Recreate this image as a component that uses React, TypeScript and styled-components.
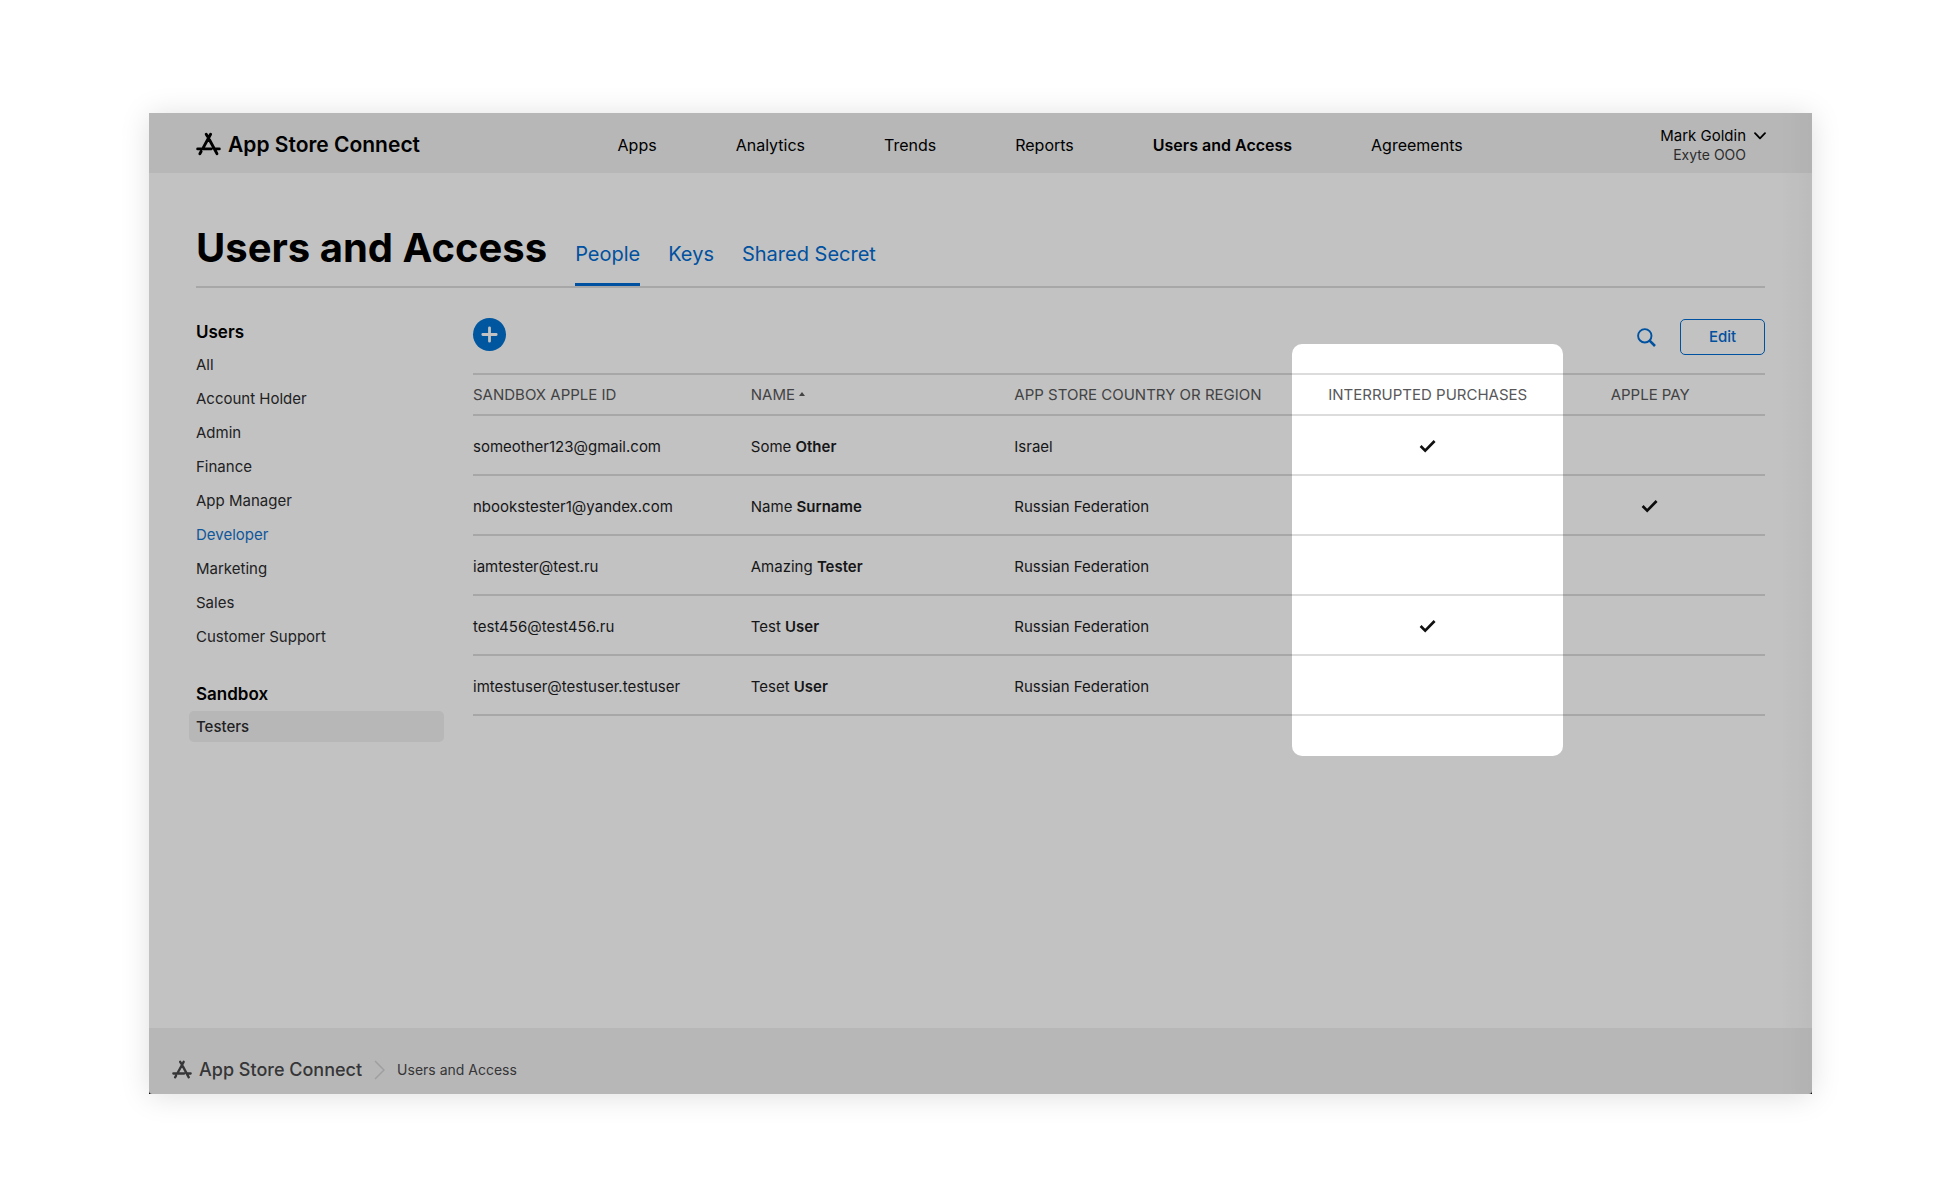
import React from "react";
import styled, { createGlobalStyle, css } from "styled-components";

const GlobalStyle = createGlobalStyle`
  *, *::before, *::after { box-sizing: border-box; }
  body {
    margin: 0;
    background: #fff;
    color: #1d1d1f;
    font-family: Inter, "Liberation Sans", sans-serif;
    font-size: 15px;
    line-height: 20px;
  }
  a { color: inherit; text-decoration: none; }
  button { font: inherit; color: inherit; background: none; border: 0; padding: 0; cursor: pointer; }
  h1, h2, ul, p { margin: 0; padding: 0; }
  ul { list-style: none; }
  svg { display: block; flex: none; }
`;

const blue = "#006bd2";
const bar = "#f1f1f1";
const rule = "#dcdcdc";

const Page = styled.div`
  display: flex;
  min-height: 100vh;
  padding: 113px 148px 106px 149px;
`;

const Frame = styled.div`
  position: relative;
  display: flex;
  flex: 1;
  flex-direction: column;
  min-width: 0;
  overflow: hidden;
  background: #000;
  box-shadow: 0 2px 28px rgba(0, 0, 0, 0.13);

  &::after {
    content: "";
    position: absolute;
    inset: 0 0 0 auto;
    width: 32px;
    background: linear-gradient(to right, transparent, rgba(0, 0, 0, 0.03));
    pointer-events: none;
  }
`;

const Header = styled.header`
  display: flex;
  align-items: center;
  justify-content: space-between;
  height: 60px;
  padding: 3px 46px 0 47px;
  background: ${bar};
  color: #000;
`;

const Brand = styled.a<{ $small?: boolean }>`
  display: flex;
  align-items: center;
  gap: 7px;
  font-size: ${(p) => (p.$small ? 18 : 21)}px;
  line-height: 24px;
  font-weight: ${(p) => (p.$small ? 500 : 600)};
`;

const Nav = styled.nav`
  display: flex;
  gap: 79px;
`;

const NavLink = styled.a<{ $active?: boolean }>`
  font-size: 16px;
  font-weight: ${(p) => (p.$active ? 600 : 400)};
`;

const Account = styled.button`
  display: flex;
  align-items: flex-start;
  gap: 8px;
  text-align: right;
  line-height: 19px;

  svg { margin-top: 6px; }
`;

const Company = styled.span`
  display: block;
  font-size: 14px;
  color: #3a3a3c;
`;

const Main = styled.main`
  flex: 1;
  padding: 48px 47px;
  background: #fff;
`;

const TitleBar = styled.div`
  display: flex;
  align-items: flex-end;
  gap: 28px;
  height: 67px;
  border-bottom: 2px solid ${rule};
`;

const Title = styled.h1`
  padding-bottom: 13px;
  color: #000;
  font-size: 40px;
  line-height: 50px;
  font-weight: 700;
`;

const Tabs = styled.nav`
  display: flex;
  gap: 28px;
`;

const Tab = styled.a<{ $active?: boolean }>`
  padding-bottom: 15px;
  border-bottom: 3px solid ${(p) => (p.$active ? blue : "transparent")};
  color: ${blue};
  font-size: 20px;
  line-height: 28px;
`;

const Columns = styled.div`
  display: flex;
  align-items: flex-start;
`;

const Sidebar = styled.aside`
  flex: none;
  width: 255px;
  margin: 30px 29px 0 -7px;
`;

const Group = styled.h2`
  padding: 0 7px;
  margin-bottom: 3px;
  color: #000;
  font-size: 17px;
  line-height: 28px;
  font-weight: 600;

  ul + & { margin-top: 28px; }
`;

const SideLink = styled.a<{ $state?: "link" | "selected" }>`
  display: block;
  height: 31px;
  margin-bottom: 3px;
  padding: 0 7px;
  border-radius: 5px;
  line-height: 31px;
  color: #2c2c2e;
  ${(p) => p.$state === "link" && css`color: #1473cc;`}
  ${(p) => p.$state === "selected" && css`background: ${bar}; font-weight: 500;`}
`;

const Content = styled.section`
  flex: 1;
  min-width: 0;
`;

const Toolbar = styled.div`
  display: flex;
  align-items: center;
  height: 85px;
  padding-top: 13px;
`;

const AddButton = styled.button`
  display: grid;
  place-items: center;
  width: 33px;
  height: 33px;
  margin: 0 auto 6px 0;
  border-radius: 50%;
  background: #0071d1;
`;

const SearchButton = styled.button`
  margin-right: 24px;
  color: ${blue};
`;

const EditButton = styled.button`
  width: 85px;
  height: 36px;
  border: 1px solid ${blue};
  border-radius: 5px;
  color: ${blue};
  font-weight: 500;
`;

const Table = styled.table`
  width: 100%;
  table-layout: fixed;
  border-collapse: separate;
  border-spacing: 0;
  border-top: 2px solid ${rule};
`;

const Th = styled.th<{ $width: string; $center?: boolean; $spotlit?: boolean }>`
  width: ${(p) => p.$width};
  height: 41px;
  padding: 0;
  border-bottom: 2px solid ${rule};
  color: #58585a;
  font-size: 15px;
  font-weight: 400;
  text-align: ${(p) => (p.$center ? "center" : "left")};
  text-transform: uppercase;
  white-space: nowrap;

  ${(p) => p.$spotlit && css`position: relative; z-index: 1;`}
  &:last-child { padding-right: 28px; }
  svg { display: inline-block; vertical-align: 4px; }
`;

const Spotlight = styled.span`
  position: absolute;
  inset: -31px 0 auto;
  height: 412px;
  border-radius: 10px;
  box-shadow: 0 0 0 4000px rgba(0, 0, 0, 0.24);
  pointer-events: none;
`;

const Td = styled.td`
  height: 60px;
  padding: 3px 0 0;
  border-bottom: 2px solid ${rule};

  b { font-weight: 600; }
  svg { margin: 0 auto; }
  &:last-child { padding-right: 28px; }
`;

const Footer = styled.footer`
  display: flex;
  align-items: center;
  gap: 12px;
  height: 66px;
  padding: 18px 23px 0;
  border-radius: 0 0 3px 3px;
  background: ${bar};
  color: #48484a;
`;

const Crumb = styled.a`
  font-size: 14px;
`;

const StoreGlyph = ({ size }: { size: number }) => (
  <svg width={size} height={size} viewBox="0 0 24 24" fill="none" stroke="currentColor" strokeWidth="2.8" strokeLinecap="round" aria-hidden="true">
    <path d="M14 2.2 7 15M9.8 2.2l1.3 2.2M12.9 7.4l7.2 13.4M1.6 16.2h13M19 16.2h3.4M4.9 18.8l-1.2 2" />
  </svg>
);

const Check = () => (
  <svg width="18" height="16" viewBox="0 0 18 16" fill="none" stroke="#111" strokeWidth="2.7" role="img" aria-label="Yes">
    <path d="M1.6 7 6.2 11.6 15.6 2" />
  </svg>
);

const navItems = ["Apps", "Analytics", "Trends", "Reports", "Users and Access", "Agreements"];
const tabs = ["People", "Keys", "Shared Secret"];
const roles = ["All", "Account Holder", "Admin", "Finance", "App Manager", "Developer", "Marketing", "Sales", "Customer Support"];

const testers = [
  { id: "someother123@gmail.com", first: "Some", last: "Other", region: "Israel", interrupted: true, pay: false },
  { id: "nbookstester1@yandex.com", first: "Name", last: "Surname", region: "Russian Federation", interrupted: false, pay: true },
  { id: "iamtester@test.ru", first: "Amazing", last: "Tester", region: "Russian Federation", interrupted: false, pay: false },
  { id: "test456@test456.ru", first: "Test", last: "User", region: "Russian Federation", interrupted: true, pay: false },
  { id: "imtestuser@testuser.testuser", first: "Teset", last: "User", region: "Russian Federation", interrupted: false, pay: false },
];

export default function App() {
  return (
    <Page>
      <GlobalStyle />
      <Frame>
        <Header>
          <Brand href="#">
            <StoreGlyph size={25} />
            App Store Connect
          </Brand>
          <Nav>
            {navItems.map((item) => (
              <NavLink key={item} href="#" $active={item === "Users and Access"}>{item}</NavLink>
            ))}
          </Nav>
          <Account type="button">
            <span>
              Mark Goldin
              <Company>Exyte OOO</Company>
            </span>
            <svg width="12" height="8" viewBox="0 0 12 8" fill="none" stroke="currentColor" strokeWidth="1.8" strokeLinecap="round" strokeLinejoin="round" aria-hidden="true">
              <path d="M1 1.2 6 6.4l5-5.2" />
            </svg>
          </Account>
        </Header>

        <Main>
          <TitleBar>
            <Title>Users and Access</Title>
            <Tabs>
              {tabs.map((tab) => (
                <Tab key={tab} href="#" $active={tab === "People"}>{tab}</Tab>
              ))}
            </Tabs>
          </TitleBar>

          <Columns>
            <Sidebar>
              <Group>Users</Group>
              <ul>
                {roles.map((role) => (
                  <li key={role}>
                    <SideLink href="#" $state={role === "Developer" ? "link" : undefined}>{role}</SideLink>
                  </li>
                ))}
              </ul>
              <Group>Sandbox</Group>
              <ul>
                <li><SideLink href="#" $state="selected">Testers</SideLink></li>
              </ul>
            </Sidebar>

            <Content>
              <Toolbar>
                <AddButton type="button" aria-label="Add tester">
                  <svg width="17" height="17" viewBox="0 0 17 17" stroke="#fff" strokeWidth="2.8" strokeLinecap="round" aria-hidden="true">
                    <path d="M8.5 1.8v13.4M1.8 8.5h13.4" />
                  </svg>
                </AddButton>
                <SearchButton type="button" aria-label="Search">
                  <svg width="19" height="19" viewBox="0 0 19 19" fill="none" stroke="currentColor" aria-hidden="true">
                    <circle cx="7.8" cy="7.8" r="6.7" strokeWidth="1.9" />
                    <path d="m12.6 12.6 5.4 5.4" strokeWidth="2.6" />
                  </svg>
                </SearchButton>
                <EditButton type="button">Edit</EditButton>
              </Toolbar>
              <Table>
                <thead>
                  <tr>
                    <Th $width="21.5%">Sandbox Apple ID</Th>
                    <Th $width="20.4%">
                      Name{" "}
                      <svg width="6" height="4" viewBox="0 0 6 4" fill="currentColor" aria-hidden="true"><path d="M3 0 6 4H0z" /></svg>
                    </Th>
                    <Th $width="21.5%">App Store Country or Region</Th>
                    <Th $width="21%" $center $spotlit>
                      Interrupted Purchases
                      <Spotlight />
                    </Th>
                    <Th $width="15.6%" $center>Apple Pay</Th>
                  </tr>
                </thead>
                <tbody>
                  {testers.map((t) => (
                    <tr key={t.id}>
                      <Td>{t.id}</Td>
                      <Td>{t.first} <b>{t.last}</b></Td>
                      <Td>{t.region}</Td>
                      <Td>{t.interrupted && <Check />}</Td>
                      <Td>{t.pay && <Check />}</Td>
                    </tr>
                  ))}
                </tbody>
              </Table>
            </Content>
          </Columns>
        </Main>

        <Footer>
          <Brand href="#" $small>
            <StoreGlyph size={20} />
            App Store Connect
          </Brand>
          <svg width="11" height="20" viewBox="0 0 11 20" fill="none" stroke="#d2d2d4" strokeWidth="1.5" aria-hidden="true">
            <path d="m1 1 9 9-9 9" />
          </svg>
          <Crumb href="#">Users and Access</Crumb>
        </Footer>
      </Frame>
    </Page>
  );
}
